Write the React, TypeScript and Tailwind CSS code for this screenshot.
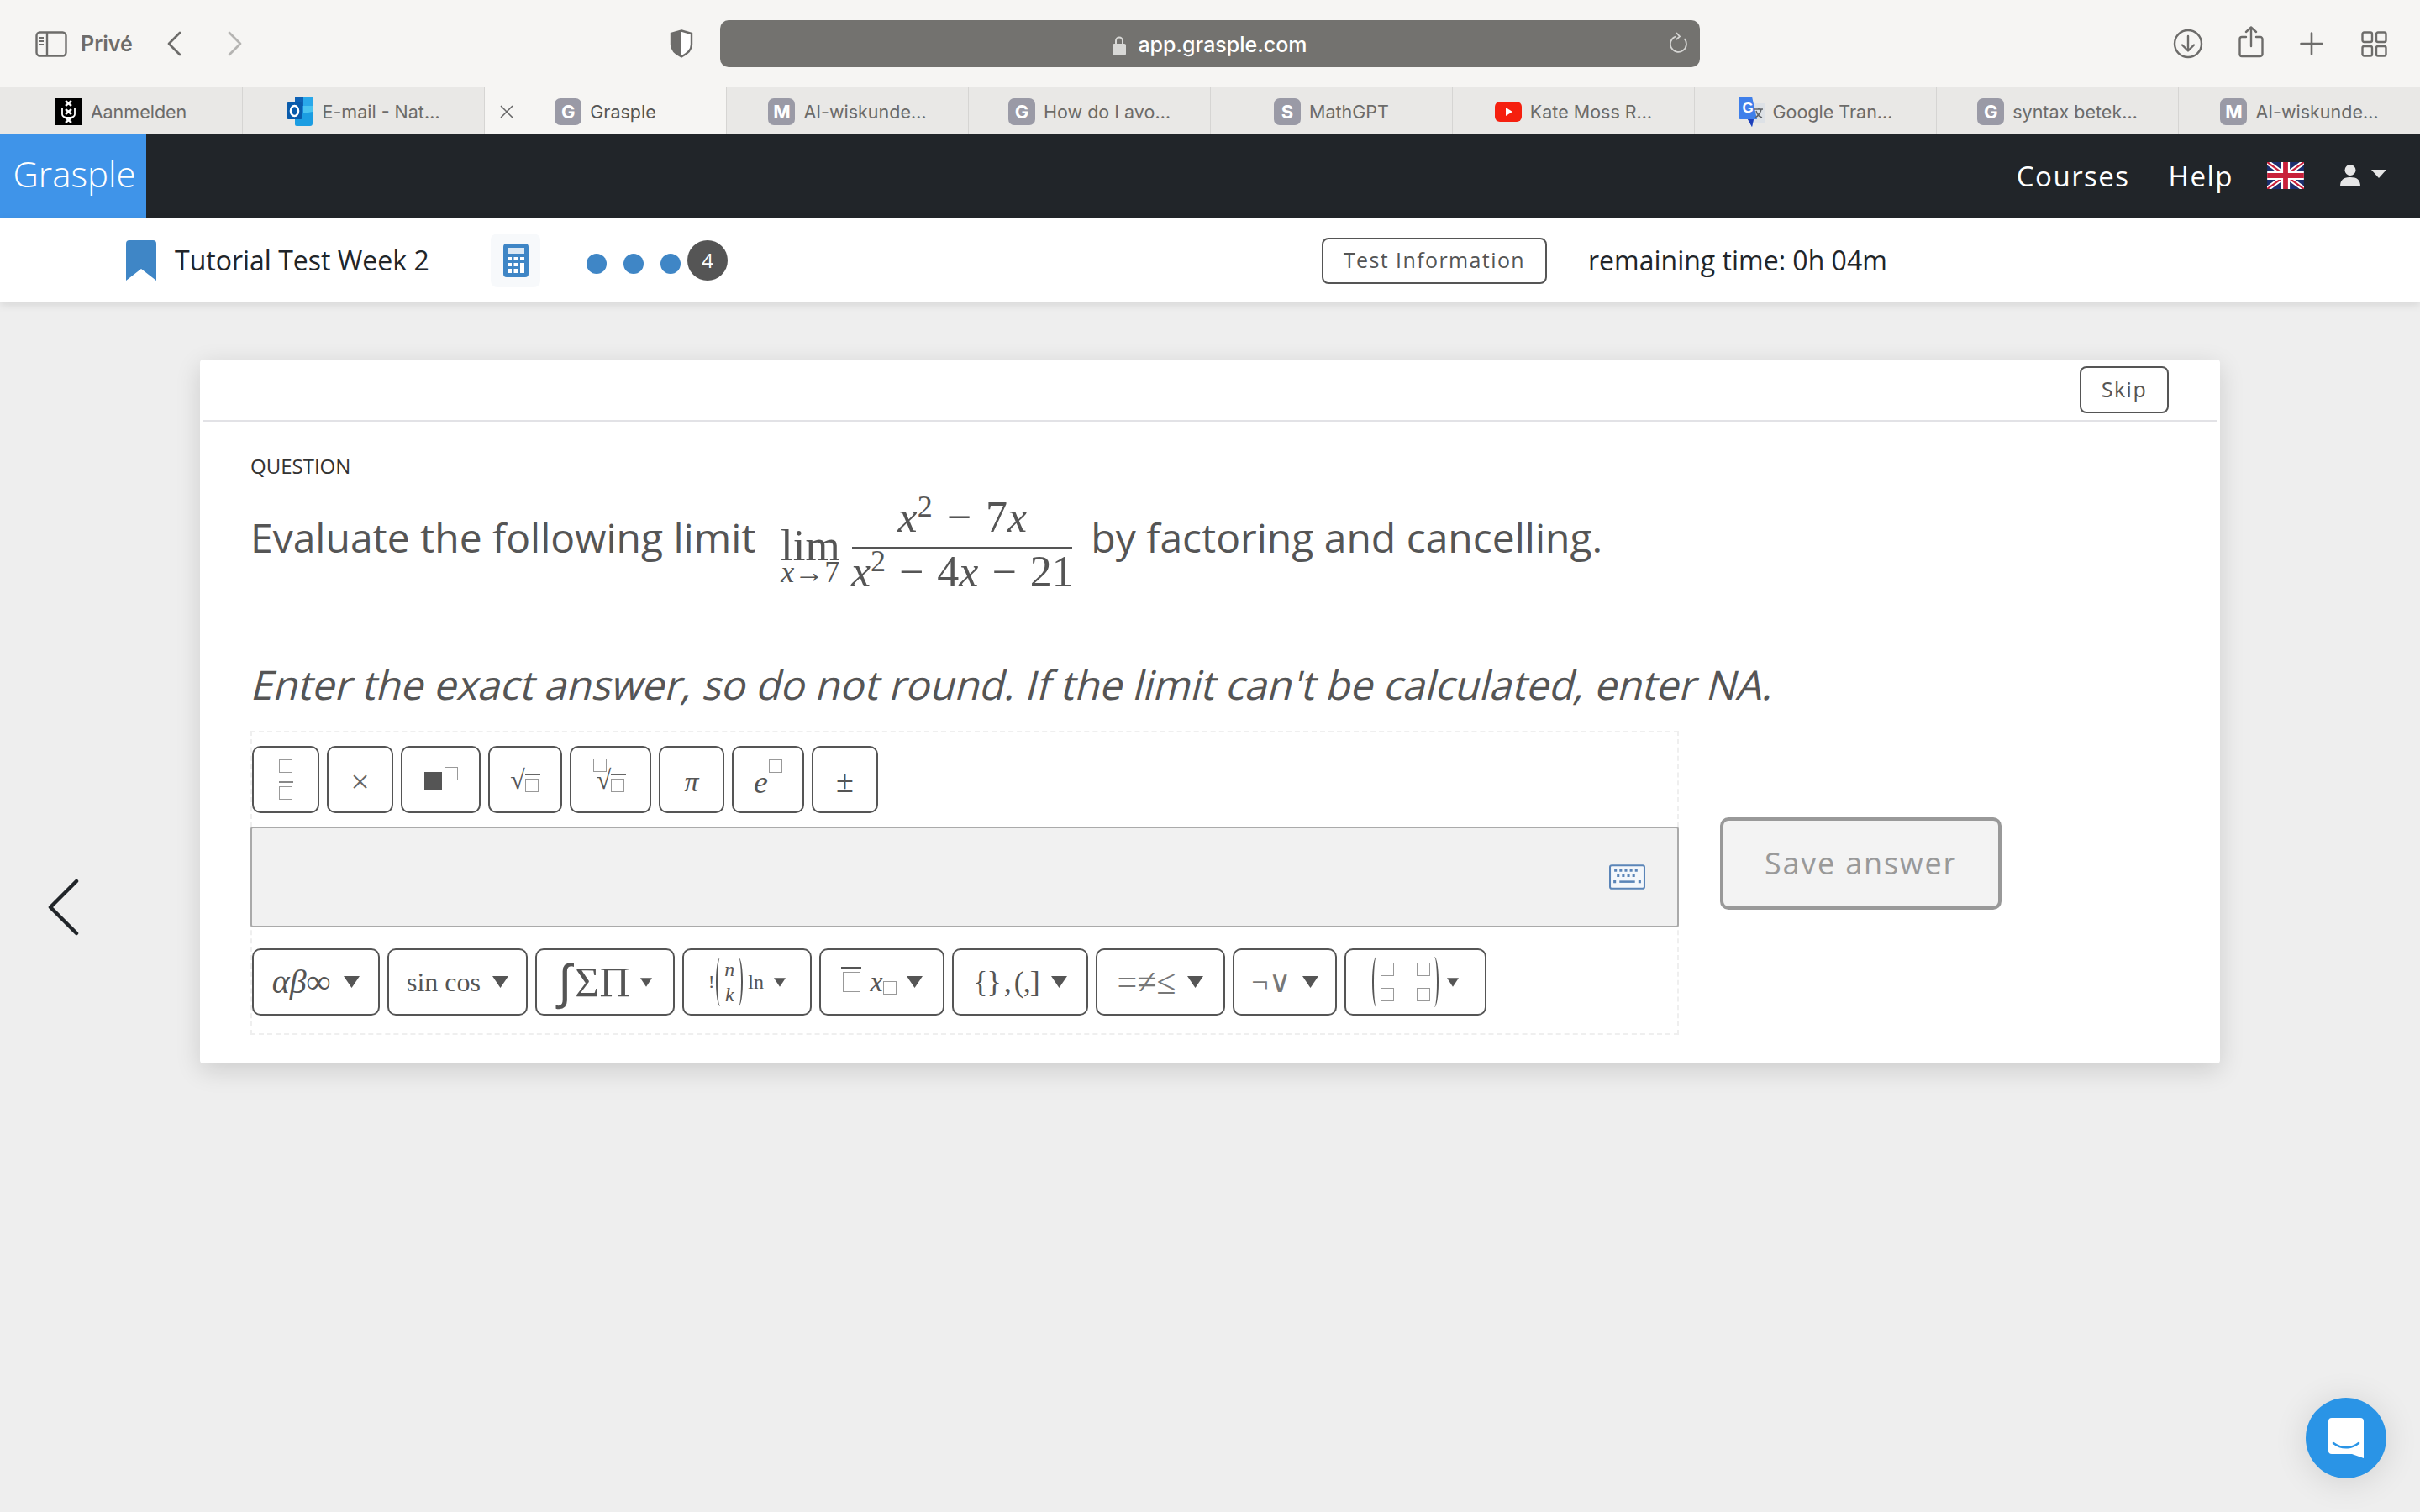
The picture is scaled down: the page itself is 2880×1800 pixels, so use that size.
import type { ReactNode } from "react";

const serif = "font-['Liberation_Serif',serif]";

type Tab = { label: string; icon: string; active?: boolean };

const tabs: Tab[] = [
  { label: "Aanmelden", icon: "uva" },
  { label: "E-mail - Nat…", icon: "outlook" },
  { label: "Grasple", icon: "G", active: true },
  { label: "AI-wiskunde…", icon: "M" },
  { label: "How do I avo…", icon: "G" },
  { label: "MathGPT", icon: "S" },
  { label: "Kate Moss R…", icon: "youtube" },
  { label: "Google Tran…", icon: "translate" },
  { label: "syntax betek…", icon: "G" },
  { label: "AI-wiskunde…", icon: "M" },
];

function Favicon({ icon }: { icon: string }) {
  if (icon === "uva") {
    return (
      <svg width="32" height="32" viewBox="0 0 32 32" className="shrink-0">
        <rect width="32" height="32" fill="#000" />
        <g stroke="#fff" strokeWidth="2.400" fill="none">
          <path d="M12 3l7 6M19 3l-7 6M12 13l7 6M19 13l-7 6M12 23l7 6M19 23l-7 6" />
          <path d="M8 11v8c0 3 3 4 7.500 4s7.500-1 7.500-4v-8" strokeWidth="1.800" />
        </g>
      </svg>
    );
  }
  if (icon === "outlook") {
    return (
      <svg width="32" height="36" viewBox="0 0 32 36" className="shrink-0">
        <rect x="10" y="0" width="21" height="12" fill="#0f62b5" />
        <rect x="20" y="0" width="11" height="12" fill="#29a8ea" />
        <rect x="10" y="11" width="11" height="12" fill="#1a86d8" />
        <rect x="20" y="11" width="11" height="12" fill="#49c3f0" />
        <path d="M10 22l21-4v14a3 3 0 0 1-3 3H12a2 2 0 0 1-2-2z" fill="#1b9de2" />
        <rect x="0" y="7" width="19" height="20" rx="2" fill="#0a5bab" />
        <ellipse cx="9.500" cy="17" rx="4.500" ry="6" fill="none" stroke="#fff" strokeWidth="2.600" />
      </svg>
    );
  }
  if (icon === "youtube") {
    return (
      <svg width="32" height="24" viewBox="0 0 32 24" className="shrink-0">
        <rect width="32" height="24" rx="6" y="0" fill="#f5200f" />
        <path d="M13 7l8 5-8 5z" fill="#fff" />
      </svg>
    );
  }
  if (icon === "translate") {
    return (
      <div className="relative h-[36px] w-[31px] shrink-0">
        <svg width="31" height="36" viewBox="0 0 31 36" className="absolute left-0 top-0">
          <rect x="12" y="8" width="19" height="24" fill="#dde1e6" />
          <path d="M0 2a2 2 0 0 1 2-2h14l6 27H18l-2 9-5-9H2a2 2 0 0 1-2-2z" fill="#3f7fea" />
          <path d="M18 27l-2 9-5-9z" fill="#1f3fb8" />
          <path d="M19 15h10M24 13v2M27 15c-1 5-4 8-7 10M21 17c1 4 4 7 7 8" stroke="#5f6368" strokeWidth="1.500" fill="none" />
        </svg>
        <span className="absolute left-[5px] top-[4px] font-['Liberation_Sans',sans-serif] text-[17px] font-bold leading-[20px] text-white">G</span>
      </div>
    );
  }
  return (
    <span className="flex h-[32px] w-[32px] shrink-0 items-center justify-center rounded-[7px] bg-[#9a9aa6] font-['Inter',sans-serif] text-[22px] font-bold leading-none text-white">
      {icon}
    </span>
  );
}

function TabStrip() {
  return (
    <div className="flex h-[56px] border-b border-black shadow-[inset_0_2px_2px_rgba(0,0,0,0.08)]">
      {tabs.map((t, i) => (
        <div
          key={i}
          className={`relative flex h-[55px] w-[288px] items-center justify-center gap-[10px] border-[#d6d5d3] pt-[3px] font-['Inter',sans-serif] text-[21.5px] ${
            i > 0 ? "border-l" : ""
          } ${t.active ? "bg-[#f6f5f3] text-[#555]" : "bg-[#e9e8e6] text-[#6c6b69]"}`}
        >
          {t.active && (
            <svg width="16" height="16" viewBox="0 0 16 16" className="absolute left-[18px] top-[21px]">
              <path d="M1 1l14 14M15 1L1 15" stroke="#666" strokeWidth="1.500" />
            </svg>
          )}
          <Favicon icon={t.icon} />
          <span className="whitespace-nowrap">{t.label}</span>
        </div>
      ))}
    </div>
  );
}

function BrowserBar() {
  return (
    <div className="flex h-[104px] items-center bg-[#f6f5f3]">
      <div className="flex w-[857px] items-center pl-[42px] text-[#6d6c6a]">
        <svg width="38" height="31" viewBox="0 0 38 31" fill="none" stroke="#6d6c6a" strokeWidth="2.400">
          <rect x="1.500" y="1.500" width="35" height="28" rx="4" />
          <path d="M14 2v27" />
          <path d="M5 8h5M5 12h5M5 16h5" strokeWidth="2" />
        </svg>
        <span className="ml-[16px] font-['Inter',sans-serif] text-[25px] font-semibold leading-none">Privé</span>
        <svg width="18" height="30" viewBox="0 0 18 30" fill="none" stroke="#6d6c6a" strokeWidth="2.800" strokeLinecap="round" strokeLinejoin="round" className="ml-[40px]">
          <path d="M16 2L3 15l13 13" />
        </svg>
        <svg width="18" height="30" viewBox="0 0 18 30" fill="none" stroke="#b5b4b2" strokeWidth="2.800" strokeLinecap="round" strokeLinejoin="round" className="ml-[55px]">
          <path d="M2 2l13 13L2 28" />
        </svg>
        <svg width="28" height="34" viewBox="0 0 28 34" className="ml-[508px]">
          <path d="M14 1.500l12 3.500v13c0 7-5 11-12 14.500C7 29 2 25 2 18V5z" fill="#fff" stroke="#6d6c6a" strokeWidth="2.400" />
          <path d="M14 1.500L2 5v13c0 7 5 11 12 14.500z" fill="#6d6c6a" />
        </svg>
      </div>
      <div className="relative flex h-[56px] w-[1166px] items-center justify-center gap-[14px] rounded-[10px] bg-[#73726f] pt-[4px] font-['Inter',sans-serif] text-[25px] font-medium text-white">
        <svg width="16" height="24" viewBox="0 0 16 24">
          <path d="M4 11V6.500a4 4 0 0 1 8 0V11" fill="none" stroke="#d8d8d6" strokeWidth="2" />
          <rect x="0" y="10" width="16" height="14" rx="2" fill="#d8d8d6" />
        </svg>
        <span>app.grasple.com</span>
        <svg width="22" height="26" viewBox="0 0 22 26" fill="none" stroke="#d5d5d3" strokeWidth="1.800" className="absolute right-[14px] top-[14px]">
          <path d="M7 5.500A9.500 9.500 0 1 0 17.500 8" />
          <path d="M8 1l4 4.500L8 9" />
        </svg>
      </div>
      <div className="flex flex-1 items-center pl-[563px]">
        <svg width="36" height="36" viewBox="0 0 36 36" fill="none" stroke="#6d6c6a" strokeWidth="2.400" strokeLinecap="round" strokeLinejoin="round">
          <circle cx="18" cy="18" r="16" />
          <path d="M18 9v17M11 19.500l7 7 7-7" />
        </svg>
        <svg width="30" height="38" viewBox="0 0 30 38" fill="none" stroke="#6d6c6a" strokeWidth="2.400" strokeLinecap="round" strokeLinejoin="round" className="ml-[42px] mb-[4px]">
          <path d="M9 13H4a2.500 2.500 0 0 0-2.500 2.500v18A2.500 2.500 0 0 0 4 36h22a2.500 2.500 0 0 0 2.500-2.500v-18A2.500 2.500 0 0 0 26 13h-5" />
          <path d="M15 24V2M9 7l6-5.500L21 7" />
        </svg>
        <svg width="28" height="28" viewBox="0 0 28 28" fill="none" stroke="#6d6c6a" strokeWidth="2.600" strokeLinecap="round" className="ml-[43px]">
          <path d="M14 1.500v25M1.500 14h25" />
        </svg>
        <svg width="31" height="31" viewBox="0 0 31 31" fill="none" stroke="#6d6c6a" strokeWidth="2.400" className="ml-[45px]">
          <rect x="1.500" y="1.500" width="11.500" height="11.500" rx="2" />
          <rect x="18" y="1.500" width="11.500" height="11.500" rx="2" />
          <rect x="1.500" y="18" width="11.500" height="11.500" rx="2" />
          <rect x="18" y="18" width="11.500" height="11.500" rx="2" />
        </svg>
      </div>
    </div>
  );
}

function UkFlag() {
  return (
    <svg width="44" height="32" viewBox="0 0 60 44" className="shrink-0">
      <rect width="60" height="44" fill="#1c2f6e" />
      <path d="M0 0l60 44M60 0L0 44" stroke="#fff" strokeWidth="8" />
      <path d="M0 0l60 44M60 0L0 44" stroke="#c8203a" strokeWidth="3" />
      <path d="M30 0v44M0 22h60" stroke="#fff" strokeWidth="14" />
      <path d="M30 0v44M0 22h60" stroke="#c8203a" strokeWidth="8" />
    </svg>
  );
}

function NavBar() {
  return (
    <div className="flex h-[100px] items-stretch bg-[#212529] font-['Open_Sans',sans-serif] text-white">
      <div className="flex w-[174px] items-center justify-center bg-[#3f94e9] pb-[6px] pl-[3px] text-[42px] font-light leading-none">
        Grasple
      </div>
      <div className="flex flex-1 items-center justify-end pr-[40px] pb-[2px]">
        <span className="text-[33px] leading-none tracking-[1.500px]">Courses</span>
        <span className="ml-[46px] text-[33px] leading-none tracking-[1.500px]">Help</span>
        <div className="ml-[40px]">
          <UkFlag />
        </div>
        <svg width="26" height="26" viewBox="0 0 26 26" fill="#e6e6e6" className="ml-[42px]">
          <circle cx="13" cy="6.500" r="6.500" />
          <path d="M1 26c0-8 4-11 12-11s12 3 12 11z" />
        </svg>
        <svg width="18" height="10" viewBox="0 0 18 10" fill="#e6e6e6" className="ml-[12px] mb-[4px]">
          <path d="M0 0h18L9 10z" />
        </svg>
      </div>
    </div>
  );
}

function SubBar() {
  return (
    <div className="relative z-10 flex h-[100px] items-center bg-white font-['Open_Sans',sans-serif] text-[#212529] shadow-[0_3px_10px_rgba(0,0,0,0.1)]">
      <div className="flex w-[1573px] items-center pl-[150px]">
        <svg width="36" height="48" viewBox="0 0 36 48" fill="#3f86c6">
          <path d="M0 4a4 4 0 0 1 4-4h28a4 4 0 0 1 4 4v44L18 34 0 48z" />
        </svg>
        <span className="ml-[22px] w-[376px] whitespace-nowrap text-[32px] leading-none">Tutorial Test Week 2</span>
        <div className="flex h-[64px] w-[59px] items-center justify-center rounded-[8px] bg-[#f7f9fb]">
          <svg width="30" height="40" viewBox="0 0 30 40">
            <rect width="30" height="40" rx="4" fill="#3f86c6" />
            <rect x="5" y="5" width="20" height="7" fill="#dbe8f4" />
            <g fill="#fff">
              <rect x="5" y="16" width="5" height="4" />
              <rect x="12.500" y="16" width="5" height="4" />
              <rect x="20" y="16" width="5" height="4" />
              <rect x="5" y="23" width="5" height="4" />
              <rect x="12.500" y="23" width="5" height="4" />
              <rect x="20" y="23" width="5" height="12" />
              <rect x="5" y="30" width="5" height="5" />
              <rect x="12.500" y="30" width="5" height="5" />
            </g>
          </svg>
        </div>
        <div className="ml-[55px] flex items-center">
          <span className="mt-[8px] h-[24px] w-[24px] rounded-full bg-[#3f86c6]" />
          <span className="ml-[20px] mt-[8px] h-[24px] w-[24px] rounded-full bg-[#3f86c6]" />
          <span className="ml-[20px] mt-[8px] h-[24px] w-[24px] rounded-full bg-[#3f86c6]" />
          <span className="ml-[8px] flex h-[48px] w-[48px] items-center justify-center rounded-full bg-[#555] text-[24px] text-white">
            4
          </span>
        </div>
      </div>
      <button className="flex h-[55px] w-[268px] items-center justify-center rounded-[8px] border-2 border-[#555] bg-white pb-[2px] text-[25px] leading-none tracking-[1.400px] text-[#555]">
        Test Information
      </button>
      <span className="ml-[49px] whitespace-nowrap text-[32px] leading-none">remaining time: 0h 04m</span>
    </div>
  );
}

function Fraction() {
  return (
    <div className={`ml-[30px] flex h-[125px] items-center text-[#555] ${serif}`}>
      <div className="flex w-[70px] flex-col items-center">
        <span className="mt-[44px] text-[53px] leading-[44px]">lim</span>
        <span className="mt-[-8px] whitespace-nowrap text-[36px] leading-[36px]">
          <i>x</i>→7
        </span>
      </div>
      <div className="ml-[15px] flex w-[262px] flex-col items-center">
        <div className="flex h-[75px] w-full items-end justify-center border-b-2 border-[#555] pb-[7px] text-[52px] leading-[56px] [word-spacing:4px]">
          <span className="whitespace-nowrap">
            <i>x</i>
            <sup className="text-[36px]">2</sup> − 7<i>x</i>
          </span>
        </div>
        <div className="h-[50px] whitespace-nowrap text-[52px] leading-[56px] [word-spacing:3px]">
          <i>x</i>
          <sup className="text-[36px]">2</sup> − 4<i>x</i> − 21
        </div>
      </div>
    </div>
  );
}

function Square({ className = "" }: { className?: string }) {
  return <span className={`inline-block h-[16px] w-[16px] shrink-0 border border-[#999] ${className}`} />;
}

function Paren({ right = false, h = "h-[58px]" }: { right?: boolean; h?: string }) {
  return (
    <span
      className={`inline-block w-[10px] shrink-0 rounded-[50%] border-[#555] ${h} ${
        right ? "border-r-2" : "border-l-2"
      }`}
    />
  );
}

function Caret({ small = false }: { small?: boolean }) {
  return (
    <svg width={small ? 14 : 19} height={small ? 11 : 14} viewBox="0 0 19 14" fill="#555" className="shrink-0">
      <path d="M0 0h19L9.500 14z" />
    </svg>
  );
}

function ToolBtn({ w, children, className = "" }: { w: string; children: ReactNode; className?: string }) {
  return (
    <button
      className={`flex h-[80px] shrink-0 items-center justify-center rounded-[10px] border-2 border-[#555] bg-white text-[#555] ${w} ${serif} ${className}`}
    >
      {children}
    </button>
  );
}

function Radical() {
  return (
    <span className="flex items-end leading-none">
      <span className="text-[32px] leading-[34px]">√</span>
      <span className="mb-[2px] flex flex-col">
        <span className="mb-[4px] h-[1.5px] w-[18px] bg-[#666]" />
        <Square />
      </span>
    </span>
  );
}

function MathEditor() {
  return (
    <div className="flex h-[362px] w-[1700px] flex-col border-2 border-dashed border-[#efefef] pt-[16px]">
      <div className="flex gap-[9px]">
        <ToolBtn w="w-[80px]">
          <span className="flex flex-col items-center">
            <Square />
            <span className="mb-[4px] mt-[10px] h-[2px] w-[17px] bg-[#888]" />
            <Square />
          </span>
        </ToolBtn>
        <ToolBtn w="w-[79px]">
          <span className="mt-[6px] text-[40px] leading-none text-[#666]">×</span>
        </ToolBtn>
        <ToolBtn w="w-[95px]">
          <span className="mt-[-2px] flex items-start">
            <span className="mt-[6px] h-[22px] w-[21px] bg-[#555]" />
            <Square className="ml-[3px] w-[15px]" />
          </span>
        </ToolBtn>
        <ToolBtn w="w-[88px]">
          <Radical />
        </ToolBtn>
        <ToolBtn w="w-[97px]">
          <span className="relative flex items-start pl-[2px]">
            <Square className="absolute left-[-2px] top-[-8px] h-[13px] w-[13px]" />
            <Radical />
          </span>
        </ToolBtn>
        <ToolBtn w="w-[78px]">
          <span className="mt-[6px] text-[34px] italic leading-none">π</span>
        </ToolBtn>
        <ToolBtn w="w-[86px]">
          <span className="flex items-start">
            <span className="mt-[6px] text-[38px] italic leading-none">e</span>
            <Square className="ml-[1px] mt-[-2px] w-[15px]" />
          </span>
        </ToolBtn>
        <ToolBtn w="w-[79px]">
          <span className="mt-[4px] text-[38px] leading-none">±</span>
        </ToolBtn>
      </div>
      <div className="mx-[-2px] mt-[16px] flex h-[120px] items-center justify-end rounded-[3px] border-2 border-[#aaa] bg-[#f1f1f1] pr-[38px]">
        <svg width="43" height="30" viewBox="0 0 42 29" fill="none">
          <rect x="1" y="1" width="40" height="27" rx="2" fill="#f4f7fb" stroke="#5b85b8" strokeWidth="2" />
          <path d="M6 7h30M9 13h24" stroke="#5b85b8" strokeWidth="3" strokeDasharray="3 3" />
          <path d="M5 20h3M34 20h3" stroke="#5b85b8" strokeWidth="3" />
          <path d="M12 20h18" stroke="#5b85b8" strokeWidth="2.500" />
        </svg>
      </div>
      <div className="mt-[25px] flex gap-[9px]">
        <ToolBtn w="w-[152px]" className="gap-[16px]">
          <span className="text-[40px] italic leading-none">αβ∞</span>
          <Caret />
        </ToolBtn>
        <ToolBtn w="w-[167px]" className="gap-[14px]">
          <span className="text-[32px] leading-none">sin cos</span>
          <Caret />
        </ToolBtn>
        <ToolBtn w="w-[166px]" className="gap-[12px]">
          <span className="flex items-center leading-none">
            <span className="font-['DejaVu_Sans',sans-serif] text-[58px] font-extralight">∫</span>
            <span className="ml-[4px] text-[50px]">ΣΠ</span>
          </span>
          <Caret small />
        </ToolBtn>
        <ToolBtn w="w-[154px]" className="gap-[12px]">
          <span className="flex items-center leading-none">
            <span className="mr-[2px] text-[22px]">!</span>
            <Paren />
            <span className="flex flex-col items-center text-[24px] italic leading-[30px]">
              <span>n</span>
              <span>k</span>
            </span>
            <Paren right />
            <span className="ml-[6px] text-[24px]">ln</span>
          </span>
          <Caret small />
        </ToolBtn>
        <ToolBtn w="w-[149px]" className="gap-[12px]">
          <span className="flex items-center">
            <span className="mb-[6px] flex flex-col items-center">
              <span className="h-[2px] w-[24px] bg-[#555]" />
              <Square className="mt-[4px] h-[24px] w-[21px]" />
            </span>
            <span className="ml-[10px] text-[34px] italic leading-none">x</span>
            <Square className="mt-[14px]" />
          </span>
          <Caret />
        </ToolBtn>
        <ToolBtn w="w-[162px]" className="gap-[14px]">
          <span className="whitespace-nowrap text-[36px] leading-none tracking-[-1px] [word-spacing:-4px]">{"{} , (,]"}</span>
          <Caret />
        </ToolBtn>
        <ToolBtn w="w-[154px]" className="gap-[14px]">
          <span className="whitespace-nowrap text-[42px] leading-none text-[#777]">=≠≤</span>
          <Caret />
        </ToolBtn>
        <ToolBtn w="w-[124px]" className="gap-[14px]">
          <span className="whitespace-nowrap text-[36px] leading-none text-[#777]">¬∨</span>
          <Caret />
        </ToolBtn>
        <ToolBtn w="w-[169px]" className="gap-[10px]">
          <span className="flex items-center leading-none">
            <Paren h="h-[60px]" />
            <span className="grid grid-cols-2 gap-x-[27px] gap-y-[14px]">
              <Square />
              <Square />
              <Square />
              <Square />
            </span>
            <Paren right h="h-[60px]" />
          </span>
          <Caret small />
        </ToolBtn>
      </div>
    </div>
  );
}

function QuestionCard() {
  return (
    <div className="mx-[238px] mt-[68px] h-[838px] rounded-[4px] bg-white px-[4px] font-['Open_Sans',sans-serif] shadow-[0_8px_30px_rgba(0,0,0,0.14)]">
      <div className="flex h-[74px] items-start justify-end border-b-[2px] border-[#e2e2e6] pr-[57px] pt-[8px]">
        <button className="flex h-[56px] w-[106px] items-center justify-center rounded-[8px] border-2 border-[#555] bg-white pb-[2px] text-[25px] leading-none tracking-[1.500px] text-[#555]">
          Skip
        </button>
      </div>
      <div className="pl-[56px]">
        <div className="mt-[38px] text-[24px] leading-[30px] text-[#333]">QUESTION</div>
        <div className="mt-[8px] flex h-[125px] items-center text-[48px] leading-[60px] text-[#555]">
          <span className="mb-[2px] whitespace-nowrap">Evaluate the following limit</span>
          <Fraction />
          <span className="mb-[2px] ml-[22px] whitespace-nowrap">by factoring and cancelling.</span>
        </div>
        <div className="ml-[-4px] mt-[82px] origin-bottom-left -skew-x-[14deg] whitespace-nowrap text-[48px] leading-[60px] text-[#555]">
          Enter the exact answer, so do not round. If the limit can't be calculated, enter NA.
        </div>
        <div className="mt-[25px] flex items-start">
          <MathEditor />
          <button className="ml-[49px] mt-[103px] flex h-[110px] w-[335px] items-center justify-center rounded-[10px] border-4 border-[#999] bg-[#f3f3f3] text-[36px] leading-none tracking-[1.800px] text-[#999]">
            Save answer
          </button>
        </div>
      </div>
    </div>
  );
}

export default function App() {
  return (
    <div className="relative h-[1800px] w-[2880px] overflow-hidden bg-[#eeeeee]">
      <BrowserBar />
      <TabStrip />
      <NavBar />
      <SubBar />
      <QuestionCard />
      {/* prev question arrow */}
      <svg width="37" height="68" viewBox="0 0 37 68" fill="none" stroke="#212529" strokeWidth="4.500" strokeLinecap="round" strokeLinejoin="round" className="absolute left-[57px] top-[1046px]">
        <path d="M34 3L3 34l31 31" />
      </svg>
      {/* chat bubble */}
      <div className="absolute left-[2744px] top-[1664px] flex h-[96px] w-[96px] items-center justify-center rounded-full bg-[#2a94e6] shadow-[0_4px_40px_rgba(0,0,0,0.12)]">
        <svg width="42" height="48" viewBox="0 0 42 48">
          <path d="M4 0h34a4 4 0 0 1 4 4v44l-14-5H4a4 4 0 0 1-4-4V4a4 4 0 0 1 4-4z" fill="#fff" />
          <path d="M6 30c9 7 21 7 30 0" fill="none" stroke="#2a94e6" strokeWidth="2.500" strokeLinecap="round" />
        </svg>
      </div>
    </div>
  );
}
